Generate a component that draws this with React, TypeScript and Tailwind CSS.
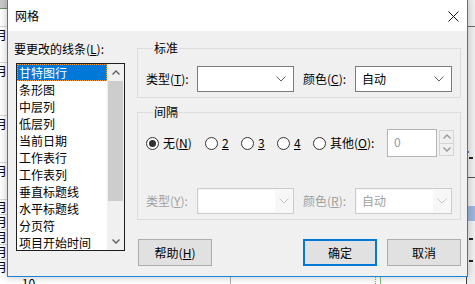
import React from 'react';

const items = ['甘特图行', '条形图', '中层列', '低层列', '当前日期', '工作表行', '工作表列', '垂直标题线', '水平标题线', '分页符', '项目开始时间'];

const Chevron = ({ color = '#606060' }: { color?: string }) => (
	<svg width="10" height="6" viewBox="0 0 10 6">
		<polyline points="0.5,0.5 5,5 9.5,0.5" fill="none" stroke={ color } strokeWidth="1" />
	</svg>
);

const Arrow = ({ up, color = '#606060' }: { up?: boolean; color?: string }) => (
	<svg width="8" height="5" viewBox="0 0 8 5">
		<polyline points={ up ? '0.5,4.5 4,1 7.5,4.5' : '0.5,0.5 4,4 7.5,0.5' } fill="none" stroke={ color } strokeWidth="1.4" />
	</svg>
);

const Combo = ({ value, disabled }: { value?: string; disabled?: boolean }) => {
	if (disabled) {
		return <div className="w-[97px] h-[26px] border border-[#cccccc] bg-[#f7f7f7] flex items-center p-[1px]">
			<div className="h-full w-[76px] bg-white flex items-center pl-[5px] text-[#a0a0a0]">{ value }</div>
			<div className="flex-1 flex justify-center"><Chevron color="#c4c4c4" /></div>
		</div>;
	}
	return <div className="w-[97px] h-[26px] border border-[#7a7a7a] bg-white flex items-center pl-[6px] pr-[7px]">
		<span className="flex-1">{ value }</span>
		<Chevron />
	</div>;
};

const Radio = ({ checked, children, className }: { checked?: boolean; children: React.ReactNode; className: string }) => (
	<div className={ `flex items-center ${ className }` }>
		<div className="w-[13px] h-[13px] rounded-full border border-[#333333] bg-white flex items-center justify-center">
			{ checked && <div className="w-[7px] h-[7px] rounded-full bg-[#333333]" /> }
		</div>
		<span className="ml-[4px]">{ children }</span>
	</div>
);

const Button = ({ children, primary, className = '' }: { children: React.ReactNode; primary?: boolean; className?: string }) => (
	<div className={ `w-[74px] h-[27px] bg-[#e1e1e1] flex items-center justify-center ${ primary ? 'border-2 border-[#0078d7]' : 'border border-[#adadad]' } ${ className }` }>
		{ children }
	</div>
);

const ListBox = () => (
	<div className="ml-[2px] mt-[6px] w-[109px] h-[188px] border border-[#1e1e1e] bg-white flex overflow-hidden">
		<div className="flex-1 flex flex-col">
			{ items.map((it, i) => (
				<div key={ it }
					 className={ `h-[17px] shrink-0 flex items-center pl-[2px] ${ i === 0 ? 'bg-[#0078d7] text-white outline outline-1 outline-dotted outline-[#f5a142] -outline-offset-1' : '' }` }>
					{ it }
				</div>
			)) }
		</div>
		<div className="w-[17px] bg-[#f0f0f0] flex flex-col">
			<div className="h-[17px] flex items-center justify-center"><Arrow up /></div>
			<div className="h-[120px] mx-[1px] bg-[#cdcdcd]" />
			<div className="flex-1" />
			<div className="h-[17px] flex items-center justify-center"><Arrow /></div>
		</div>
	</div>
);

// the window behind the dialog: only its edges show
const Background = () => (
	<div className="w-full h-full flex bg-white leading-[12px]">
		<div className="w-[8px] flex flex-col overflow-hidden">
			<div className="h-[9px] shrink-0 bg-[#c8c8c8] border-b border-[#6d8f6d]" />
			<div className="h-[18px] shrink-0 border-b border-[#d9d9d9]" />
			<div className="h-[16px] shrink-0 flex items-center"><span className="ml-[-5px]">月</span></div>
			<div className="h-[20px] shrink-0 border-b border-[#d9d9d9]" />
			<div className="h-[16px] shrink-0 flex items-center"><span className="ml-[-5px]">月</span></div>
			<div className="h-[37px] shrink-0 border-b border-[#d9d9d9]" />
			<div className="h-[16px] shrink-0 flex items-center"><span className="ml-[-5px]">月</span></div>
			<div className="h-[31px] shrink-0 border-b border-[#d9d9d9]" />
			<div className="h-[16px] shrink-0 flex items-center"><span className="ml-[-5px]">月</span></div>
			<div className="h-[21px] shrink-0 border-b border-[#d9d9d9]" />
			<div className="h-[15px] shrink-0 flex items-center border-b border-[#d9d9d9]"><span className="ml-[-5px]">月</span></div>
			<div className="h-[15px] shrink-0 flex items-center border-b border-[#d9d9d9]"><span className="ml-[-5px]">月</span></div>
			<div className="h-[15px] shrink-0 flex items-center border-b border-[#d9d9d9]"><span className="ml-[-5px]">月</span></div>
			<div className="h-[15px] shrink-0 flex items-center border-b border-[#d9d9d9]"><span className="ml-[-5px]">月</span></div>
			<div className="h-[14px] shrink-0 flex items-center"><span className="ml-[-5px]">月</span></div>
		</div>
		<div className="flex-1 flex flex-col justify-end">
			<div className="h-[8px] border-t border-[#d0d0d0] flex text-[12px] leading-[12px]">
				<span className="ml-[14px]">10</span>
				<div className="ml-[195px] w-px bg-[#b0b0b0]" />
				<div className="ml-[144px] w-px border-l border-dotted border-[#999999]" />
				<div className="ml-[4px] w-px bg-[#7fbf7f]" />
				<div className="ml-[85px] w-px bg-[#404040]" />
			</div>
		</div>
		<div className="w-[8px] bg-[#f0f0f0] flex flex-col">
			<div className="h-[27px] shrink-0 border-b border-[#6b6b6b]" />
			<div className="h-[124px] shrink-0" />
			<div className="h-[2px] w-[2px] shrink-0 bg-[#4a7cc0]" />
			<div className="h-[4px] shrink-0" />
			<div className="h-[2px] w-[4px] shrink-0 ml-[2px] bg-[#222222]" />
			<div className="h-[19px] shrink-0 border-b border-[#555555]" />
			<div className="h-[28px] shrink-0" />
			<div className="h-[15px] shrink-0 bg-[#9db8df]" />
			<div className="h-[17px] shrink-0" />
			<div className="h-[2px] w-[4px] shrink-0 ml-[2px] bg-[#222222]" />
			<div className="h-[20px] shrink-0" />
			<div className="h-[2px] w-[4px] shrink-0 ml-[2px] bg-[#222222]" />
		</div>
	</div>
);

const App = () => {
	return <div className="relative w-[475px] h-[284px] overflow-hidden font-['Noto_Sans_CJK_SC',sans-serif] text-[12px] leading-[16px] text-black">
		<Background />
		<div className="absolute left-[7px] top-[-1px] w-[461px] h-[278px] border border-[#1883d7] flex flex-col shadow-[0_0_8px_rgba(0,0,0,0.25)]">
			<div className="h-[31px] shrink-0 bg-white flex items-center pl-[7px] pt-[1px]">
				<span className="flex-1">网格</span>
				<svg className="mr-[8px]" width="11" height="11" viewBox="0 0 11 11">
					<path d="M0.5 0.5 L10.5 10.5 M10.5 0.5 L0.5 10.5" stroke="#111111" strokeWidth="1" />
				</svg>
			</div>
			<div className="flex-1 bg-[#f0f0f0] flex pt-[9px]">
				<div className="w-[129px] pl-[6px] pt-[1px]">
					<div>要更改的线条(<span className="underline">L</span>):</div>
					<ListBox />
				</div>
				<div className="w-[324px] flex flex-col">
					<fieldset className="border border-[#dcdcdc] pl-[8px] pb-[5px]">
						<legend className="ml-[7px] px-[1px]">标准</legend>
						<div className="mt-[10px] flex items-center">
							<span className="w-[51px]">类型(<span className="underline">T</span>):</span>
							<Combo />
							<span className="ml-[9px] w-[52px]">颜色(<span className="underline">C</span>):</span>
							<Combo value="自动" />
						</div>
					</fieldset>
					<fieldset className="mt-[6px] border border-[#dcdcdc] pl-[8px] pb-[5px]">
						<legend className="ml-[7px] px-[1px]">间隔</legend>
						<div className="mt-[9px] h-[28px] flex items-center">
							<Radio checked className="w-[59px]">无(<span className="underline">N</span>)</Radio>
							<Radio className="w-[36px]"><span className="underline">2</span></Radio>
							<Radio className="w-[36px]"><span className="underline">3</span></Radio>
							<Radio className="w-[36px]"><span className="underline">4</span></Radio>
							<Radio className="w-[74px]">其他(<span className="underline">O</span>):</Radio>
							<div className="w-[50px] h-[28px] border border-[#b4b4b4] bg-white pl-[6px] pt-[4px] text-[#8d9cb0]">0</div>
							<div className="ml-[2px] w-[15px] h-[26px] flex flex-col">
								<div className="flex-1 border border-[#d4d4d4] bg-[#f0f0f0] flex items-center justify-center"><Arrow up color="#9a9a9a" /></div>
								<div className="flex-1 border border-t-0 border-[#d4d4d4] bg-[#f0f0f0] flex items-center justify-center"><Arrow color="#9a9a9a" /></div>
							</div>
						</div>
						<div className="mt-[31px] flex items-center text-[#a0a0a0]">
							<span className="w-[51px]">类型(<span className="underline">Y</span>):</span>
							<Combo disabled />
							<span className="ml-[9px] w-[52px]">颜色(<span className="underline">R</span>):</span>
							<Combo disabled value="自动" />
						</div>
					</fieldset>
					<div className="mt-[19px] flex">
						<Button className="ml-[1px]">帮助(<span className="underline">H</span>)</Button>
						<Button primary className="ml-[91px]">确定</Button>
						<Button className="ml-[10px]">取消</Button>
					</div>
				</div>
			</div>
		</div>
	</div>;
};

export default App;
